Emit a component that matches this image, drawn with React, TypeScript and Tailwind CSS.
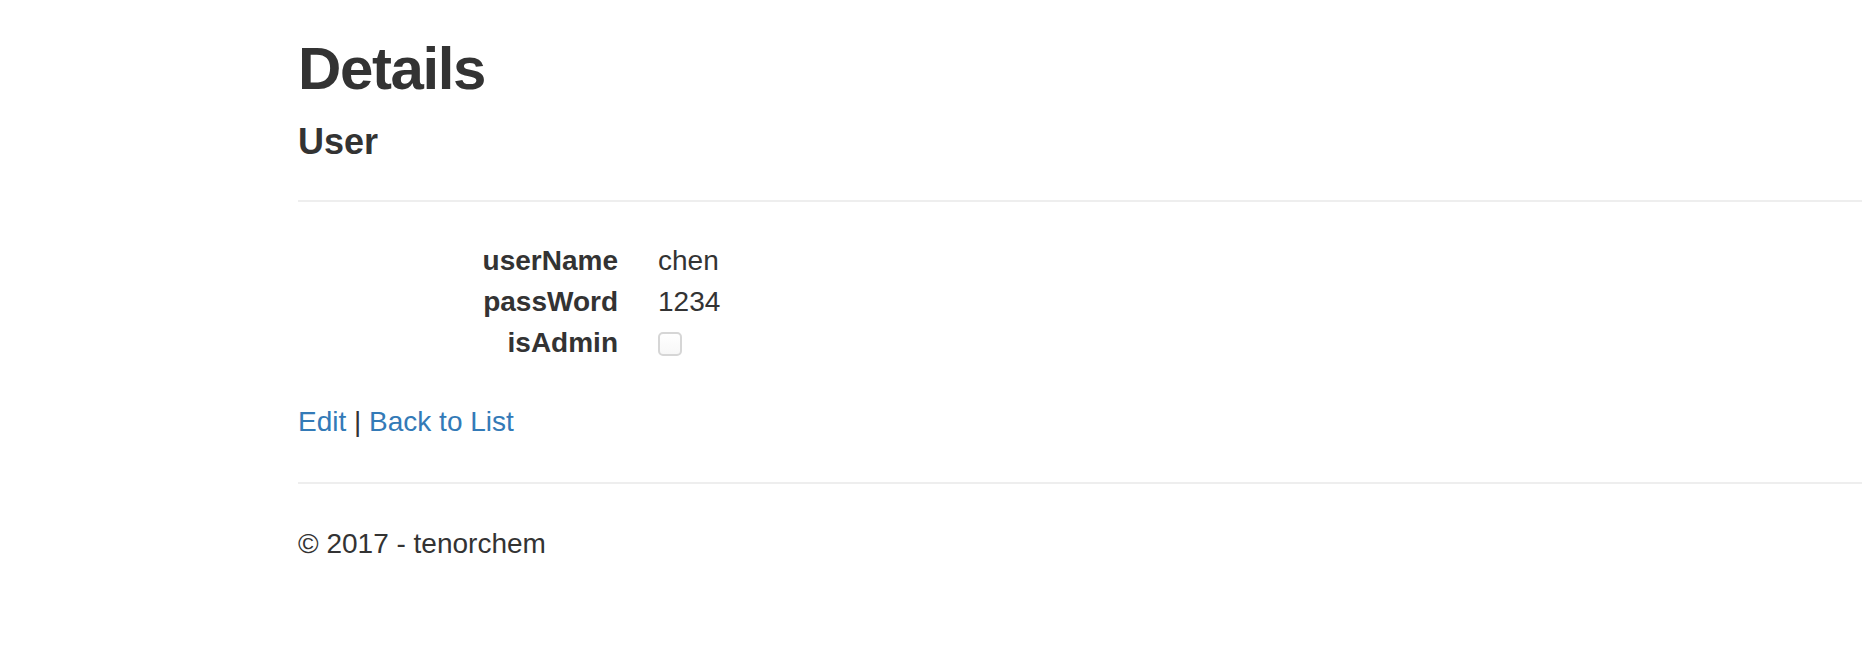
import React from 'react';

export default function App() {
  const rows = [
    { label: 'userName', value: 'chen' },
    { label: 'passWord', value: '1234' },
  ];

  return (
    <div className="min-h-screen bg-white text-[#333333] pl-[298px] pt-[36px] font-['Liberation_Sans',Arial,sans-serif]">
      <h2 className="text-[60px] leading-[66px] font-bold tracking-[-1.4px]">Details</h2>

      <div>
        <h4 className="mt-[20px] text-[36px] leading-[39.6px] font-bold">User</h4>
        <hr className="mt-[38px] mb-[38px] border-t-2 border-[#eeeeee]" />

        {/* dl-horizontal */}
        <dl className="grid grid-cols-[320px_1fr] gap-x-[40px] text-[28px] leading-[41px]">
          {rows.map((r) => (
            <React.Fragment key={r.label}>
              <dt className="text-right font-bold">{r.label}</dt>
              <dd>{r.value}</dd>
            </React.Fragment>
          ))}
          <dt className="text-right font-bold">isAdmin</dt>
          <dd className="h-[41px] pt-[10px]">
            <span className="block w-[24px] h-[24px] rounded-[5px] border-2 border-[#d6d6d6] bg-gradient-to-b from-white to-[#f7f7f7]" />
          </dd>
        </dl>
      </div>

      <p className="mt-[39px] text-[28px] leading-[40px]">
        <a href="#" className="text-[#337ab7]">Edit</a> | <a href="#" className="text-[#337ab7]">Back to List</a>
      </p>

      <hr className="mt-[40px] mb-[40px] border-t-2 border-[#eeeeee]" />

      <footer>
        <p className="text-[28px] leading-[40px]">© 2017 - tenorchem</p>
      </footer>
    </div>
  );
}
